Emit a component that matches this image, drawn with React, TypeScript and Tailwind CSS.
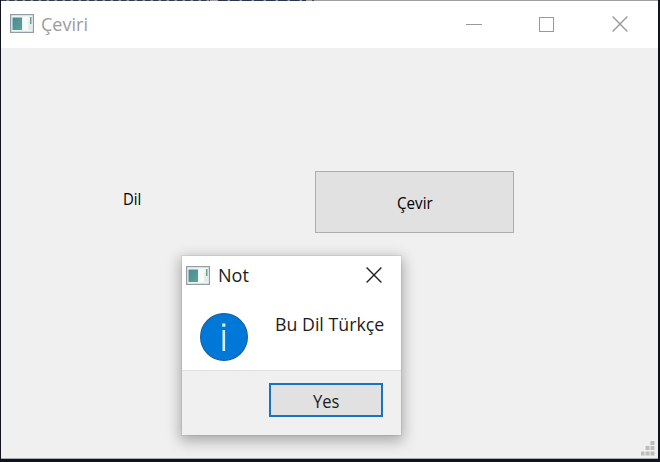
import type { ReactNode } from "react";

function AppIcon({ className = "" }: { className?: string }) {
  return (
    <svg className={`shrink-0 ${className}`} width="24" height="19" viewBox="0 0 24 19">
      <defs>
        <linearGradient id="pane" x1="0" y1="0" x2="1" y2="1">
          <stop offset="0" stopColor="#4d87a0" />
          <stop offset="1" stopColor="#5ba58a" />
        </linearGradient>
      </defs>
      <rect x="0.6" y="0.6" width="22.8" height="17.8" fill="#eef3f4" stroke="#939c9f" strokeWidth="1.2" />
      <rect x="2.5" y="3.5" width="9.5" height="12.5" fill="url(#pane)" />
      <rect x="13" y="3" width="5" height="13" fill="#f7faf9" />
      <rect x="18.5" y="7" width="4" height="9" fill="#e1ece9" />
      <rect x="20" y="3" width="1.5" height="7" fill="#6fa28c" />
    </svg>
  );
}

function Cross({ color }: { color: string }) {
  return (
    <svg className="shrink-0" width="16" height="16" viewBox="0 0 16 16">
      <path d="M.6.6 15.4 15.4M15.4.6.6 15.4" stroke={color} strokeWidth="1.4" />
    </svg>
  );
}

function Label({ className, children }: { className: string; children: ReactNode }) {
  return <span className={`inline-block whitespace-nowrap ${className}`}>{children}</span>;
}

function NoteDialog() {
  return (
    <section className="absolute left-[182px] top-[256px] flex h-[179px] w-[219px] flex-col bg-white text-[19px] leading-6 text-[#1c1c1c] shadow-[0_4px_13px_2px_rgba(0,0,0,0.3),0_0_0_1px_rgba(0,0,0,0.06)]">
      <header className="flex h-[38px] items-center pl-1 pr-[19px]">
        <AppIcon />
        <Label className="ml-2 origin-left scale-x-[0.95]">Not</Label>
        <div className="ml-auto">
          <Cross color="#222222" />
        </div>
      </header>
      <div className="flex h-[77px] items-start border-b border-[#dedede] pl-[18px] pt-[18px]">
        <svg className="mt-px shrink-0" width="48" height="48" viewBox="0 0 48 48">
          <circle cx="24" cy="24" r="23.4" fill="#0078d7" stroke="#1763a5" strokeWidth="1.2" />
          <rect x="22.2" y="10.5" width="3.2" height="3.2" fill="#d5f3ff" />
          <rect x="22.5" y="17" width="2.6" height="21" fill="#d5f3ff" />
        </svg>
        <Label className="ml-[27px] origin-left scale-x-[0.935]">Bu Dil Türkçe</Label>
      </div>
      <footer className="flex flex-1 items-start justify-end bg-[#f0f0f0] pr-[18px] pt-3">
        <button className="flex h-[34px] w-[114px] items-center justify-center border-2 border-[#1874c1] bg-[#e1e1e1] pt-0.5">
          <Label className="origin-center scale-x-[0.87]">Yes</Label>
        </button>
      </footer>
    </section>
  );
}

export default function App() {
  return (
    <main className="relative flex h-[462px] w-[660px] flex-col overflow-hidden bg-[#10131d] pl-px pr-0.5 font-['Open_Sans','Noto_Sans',sans-serif]">
      <div className="flex h-px shrink-0 bg-[#9d9fa3]">
        <div className="w-[209px] bg-[repeating-linear-gradient(90deg,#343d48_0px,#343d48_5px,#84909b_6px,#84909b_8px)]" />
        <div className="ml-2 w-[88px] bg-[repeating-linear-gradient(90deg,#29344b_0px,#29344b_9px,#8994a5_10px,#8994a5_12px)]" />
        <div className="ml-[6px] w-0.5 bg-[#444a58]" />
      </div>
      <header className="flex h-[47px] shrink-0 items-center bg-white pb-px pl-[9px] pr-[30px]">
        <AppIcon className="-mt-px" />
        <Label className="ml-[7px] origin-left scale-x-[0.95] text-[19px] leading-6 text-[#9b9b9b]">Çeviri</Label>
        <div className="ml-auto flex items-center">
          <div className="h-px w-4 bg-[#999999]" />
          <div className="ml-[57px] size-[15px] border border-[#999999]" />
          <div className="ml-[58px]">
            <Cross color="#999999" />
          </div>
        </div>
      </header>
      <div className="flex h-[410px] shrink-0 flex-col bg-[#f0f0f0]">
        <div className="flex items-start pt-[123px]">
          <div className="w-[314px] pl-[122px] pt-4 text-[16px] leading-6 text-black">
            <Label className="origin-left scale-x-[0.93]">Dil</Label>
          </div>
          <button className="flex h-[62px] w-[199px] items-center justify-center border border-[#adadad] bg-[#e1e1e1] pt-0.5 text-[16px] leading-6 text-black">
            <Label className="origin-center scale-x-[0.95]">Çevir</Label>
          </button>
        </div>
        <svg className="mb-0.5 ml-auto mr-[3px] mt-auto" width="14" height="15" viewBox="0 0 14 15" fill="#bdbdbd">
          <path d="M9.5 0h4v4h-4zM4.500 5h4v4h-4zM9.500 5h4v4h-4zM0 10.500h3.500v4H0zM4.500 10.500h4v4h-4zM9.500 10.500h4v4h-4z" />
        </svg>
      </div>
      <div className="h-px shrink-0 bg-[#a9adad]" />
      <NoteDialog />
    </main>
  );
}
